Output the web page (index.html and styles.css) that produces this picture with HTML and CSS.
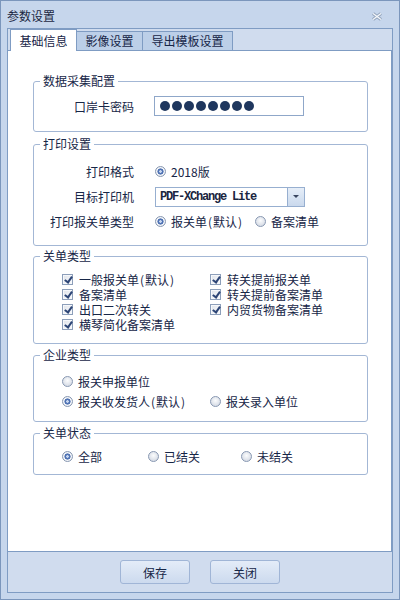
FILE: index.html
```html
<!DOCTYPE html>
<html lang="zh-CN">
<head>
<meta charset="UTF-8">
<title>参数设置</title>
<link rel="stylesheet" href="styles.css">
</head>
<body>
    <div class="window">
        <!-- Title bar -->
        <div class="titlebar">
            <span class="title">参数设置</span>
            <svg class="close" width="12" height="9" viewBox="0 0 12 9">
                <path d="M2 1.5 L10 7.5 M10 1.5 L2 7.5" stroke="#95a6be" stroke-width="3.4" fill="none"/>
                <path d="M2 1.5 L10 7.5 M10 1.5 L2 7.5" stroke="#f5f8fb" stroke-width="1.2" fill="none"/>
            </svg>
        </div>

        <div class="frame">
            <!-- Tabs -->
            <div class="tabs">
                <div class="tab active">基础信息</div>
                <div class="tab">影像设置</div>
                <div class="tab tab-wide">导出模板设置</div>
            </div>

            <div class="page">
                <fieldset class="group group-collect">
                    <legend>数据采集配置</legend>
                    <div class="form-row form-row-short">
                        <span class="form-label">口岸卡密码</span>
                        <div class="password">
                            <span class="dot"></span><span class="dot"></span><span class="dot"></span><span class="dot"></span>
                            <span class="dot"></span><span class="dot"></span><span class="dot"></span><span class="dot"></span>
                        </div>
                    </div>
                </fieldset>

                <fieldset class="group group-print">
                    <legend>打印设置</legend>
                    <div class="form-row">
                        <span class="form-label">打印格式</span>
                        <div class="options">
                            <span class="option"><span class="radio checked"></span>2018版</span>
                        </div>
                    </div>
                    <div class="form-row">
                        <span class="form-label">目标打印机</span>
                        <div class="select">
                            <span class="select-text">PDF-XChange Lite</span>
                            <span class="select-btn"><span class="arrow"></span></span>
                        </div>
                    </div>
                    <div class="form-row">
                        <span class="form-label">打印报关单类型</span>
                        <div class="options">
                            <span class="option option-100"><span class="radio checked"></span>报关单<span class="paren">(</span>默认<span class="paren">)</span></span>
                            <span class="option"><span class="radio"></span>备案清单</span>
                        </div>
                    </div>
                </fieldset>

                <fieldset class="group group-types">
                    <legend>关单类型</legend>
                    <div class="check-grid">
                        <span class="option"><span class="check"></span>一般报关单<span class="paren">(</span>默认<span class="paren">)</span></span>
                        <span class="option"><span class="check"></span>转关提前报关单</span>
                        <span class="option"><span class="check"></span>备案清单</span>
                        <span class="option"><span class="check"></span>转关提前备案清单</span>
                        <span class="option"><span class="check"></span>出口二次转关</span>
                        <span class="option"><span class="check"></span>内贸货物备案清单</span>
                        <span class="option"><span class="check"></span>横琴简化备案清单</span>
                    </div>
                </fieldset>

                <fieldset class="group group-company">
                    <legend>企业类型</legend>
                    <div class="radio-grid">
                        <span class="option"><span class="radio"></span>报关申报单位</span>
                        <span class="option"></span>
                        <span class="option"><span class="radio checked"></span>报关收发货人<span class="paren">(</span>默认<span class="paren">)</span></span>
                        <span class="option"><span class="radio"></span>报关录入单位</span>
                    </div>
                </fieldset>

                <fieldset class="group group-status">
                    <legend>关单状态</legend>
                    <div class="status-row">
                        <span class="option status-all"><span class="radio checked"></span>全部</span>
                        <span class="option status-done"><span class="radio"></span>已结关</span>
                        <span class="option"><span class="radio"></span>未结关</span>
                    </div>
                </fieldset>
            </div>

            <!-- Footer buttons -->
            <div class="buttons">
                <button class="btn">保存</button>
                <button class="btn">关闭</button>
            </div>
        </div>
    </div>
</body>
</html>
```

FILE: styles.css
```css
body {
    margin: 0;
    font-family: "Noto Sans CJK SC", sans-serif;
    font-size: 12px;
    color: #172647;
    overflow: hidden;
}
.window {
    width: 400px;
    height: 600px;
    box-sizing: border-box;
    border: 1px solid #7b96bc;
    background-color: #c6d6ec;
    display: flex;
    flex-direction: column;
}
.titlebar {
    height: 27px;
    box-sizing: border-box;
    padding: 3px 16px 0 6px;
    display: flex;
    align-items: center;
    justify-content: space-between;
}
.title {
    line-height: 16px;
    color: #1c2843;
}
.close {
    display: block;
}
.frame {
    flex: 1;
    margin: 0 6px 6px;
    border: 1px solid #7f9cc3;
    background-color: #d0dcee;
    display: flex;
    flex-direction: column;
}
.tabs {
    height: 21px;
    padding-left: 2px;
    display: flex;
    align-items: flex-start;
}
.tab {
    box-sizing: border-box;
    width: 67px;
    height: 19px;
    margin-top: 2px;
    margin-left: -1px;
    border: 1px solid #7f9cc3;
    border-bottom: none;
    background-color: #bccfe8;
    text-align: center;
    line-height: 18px;
}
.tab:first-child {
    margin-left: 0;
}
.tab-wide {
    width: 91px;
}
.tab.active {
    height: 22px;
    margin-top: 0;
    margin-bottom: -1px;
    background-color: #fff;
    position: relative;
    z-index: 1;
    line-height: 21px;
}
.page {
    flex: 1;
    background-color: #fff;
    border-top: 1px solid #7f9cc3;
    border-right: 1px solid #7f9cc3;
    border-bottom: 1px solid #7f9cc3;
}
.group {
    width: 335px;
    box-sizing: border-box;
    min-width: 0;
    margin: 0 0 0 25px;
    padding: 0;
    border: 1px solid #a3b7d5;
    border-radius: 3px;
}
.group legend {
    margin-left: 6px;
    padding: 0 3px;
    line-height: 16px;
}
.group-collect {
    margin-top: 22px;
    padding: 7px 0 15px;
}
.group-print {
    margin-top: 4px;
    padding: 7px 0 11px;
}
.group-types {
    margin-top: 2px;
    padding: 8px 0 11px;
}
.group-company {
    margin-top: 3px;
    padding: 8px 0 10px;
}
.group-status {
    margin-top: 3px;
    padding: 5px 0 8px;
}
.form-row {
    display: grid;
    grid-template-columns: 100px 150px;
    column-gap: 21px;
    align-items: center;
    height: 25px;
}
.form-row-short {
    height: 20px;
}
.form-label {
    text-align: right;
    white-space: nowrap;
}
.password {
    box-sizing: border-box;
    width: 150px;
    height: 20px;
    margin-left: -1px;
    padding-left: 5px;
    border: 1px solid #8fa7c9;
    display: flex;
    align-items: center;
    gap: 2px;
}
.dot {
    width: 10px;
    height: 10px;
    border-radius: 50%;
    background-color: #1f375e;
}
.options {
    display: flex;
    align-items: center;
}
.option {
    flex: none;
    display: flex;
    align-items: center;
    white-space: nowrap;
    line-height: 15px;
    height: 15px;
}
.option-100 {
    width: 100px;
}
.paren {
    padding: 0 1px;
}
.radio {
    box-sizing: border-box;
    width: 11px;
    height: 11px;
    margin-right: 5px;
    border: 1px solid #8898b2;
    border-radius: 50%;
    background: radial-gradient(circle at 50% 40%, #fbfcfd 0, #d9dee7 70%);
    flex: none;
}
.radio.checked {
    background: radial-gradient(circle, #c7d6ef 0, #c7d6ef 1px, #4f72b3 1.6px, #4f72b3 2.8px, #ffffff 3.4px, #dde2ea 5px);
}
.select {
    box-sizing: border-box;
    width: 150px;
    height: 20px;
    border: 1px solid #97afd0;
    display: flex;
    align-items: center;
}
.select-text {
    flex: 1;
    padding-left: 4px;
    font-family: "Liberation Mono", monospace;
    font-size: 12px;
    font-weight: bold;
    letter-spacing: -1.2px;
    color: #1a2540;
}
.select-btn {
    width: 16px;
    height: 18px;
    border-left: 1px solid #97afd0;
    background: linear-gradient(#e6eef8, #cad9ed);
    display: flex;
    align-items: center;
    justify-content: center;
}
.arrow {
    width: 0;
    height: 0;
    border-left: 3px solid transparent;
    border-right: 3px solid transparent;
    border-top: 3px solid #3a4660;
}
.check-grid {
    padding-left: 28px;
    display: grid;
    grid-template-columns: 148px 148px;
    grid-auto-rows: 15px;
}
.check {
    box-sizing: border-box;
    width: 11px;
    height: 11px;
    margin-right: 6px;
    border: 1px solid #8d9fba;
    background: linear-gradient(135deg, #dfe3ea, #fbfcfd);
    box-shadow: inset 0 0 0 1px #f6f8fb;
    position: relative;
    flex: none;
}
.check::after {
    content: "";
    position: absolute;
    left: 3px;
    top: 0;
    width: 3px;
    height: 6px;
    border-right: 2px solid #2d4576;
    border-bottom: 2px solid #2d4576;
    transform: rotate(35deg);
}
.radio-grid {
    padding-left: 28px;
    display: grid;
    grid-template-columns: 148px 148px;
    grid-auto-rows: 20px;
    align-items: center;
}
.status-row {
    padding-left: 28px;
    height: 20px;
    display: flex;
    align-items: center;
}
.status-all {
    width: 86px;
}
.status-done {
    width: 93px;
}
.buttons {
    height: 40px;
    display: flex;
    justify-content: center;
    align-items: center;
    gap: 20px;
}
.btn {
    box-sizing: border-box;
    width: 70px;
    height: 24px;
    padding: 0;
    border: 1px solid #a0b5d6;
    border-radius: 3px;
    background: linear-gradient(#e4ecf8, #ccdaee);
    font-family: "Noto Sans CJK SC", sans-serif;
    font-size: 12px;
    color: #172647;
}
```
